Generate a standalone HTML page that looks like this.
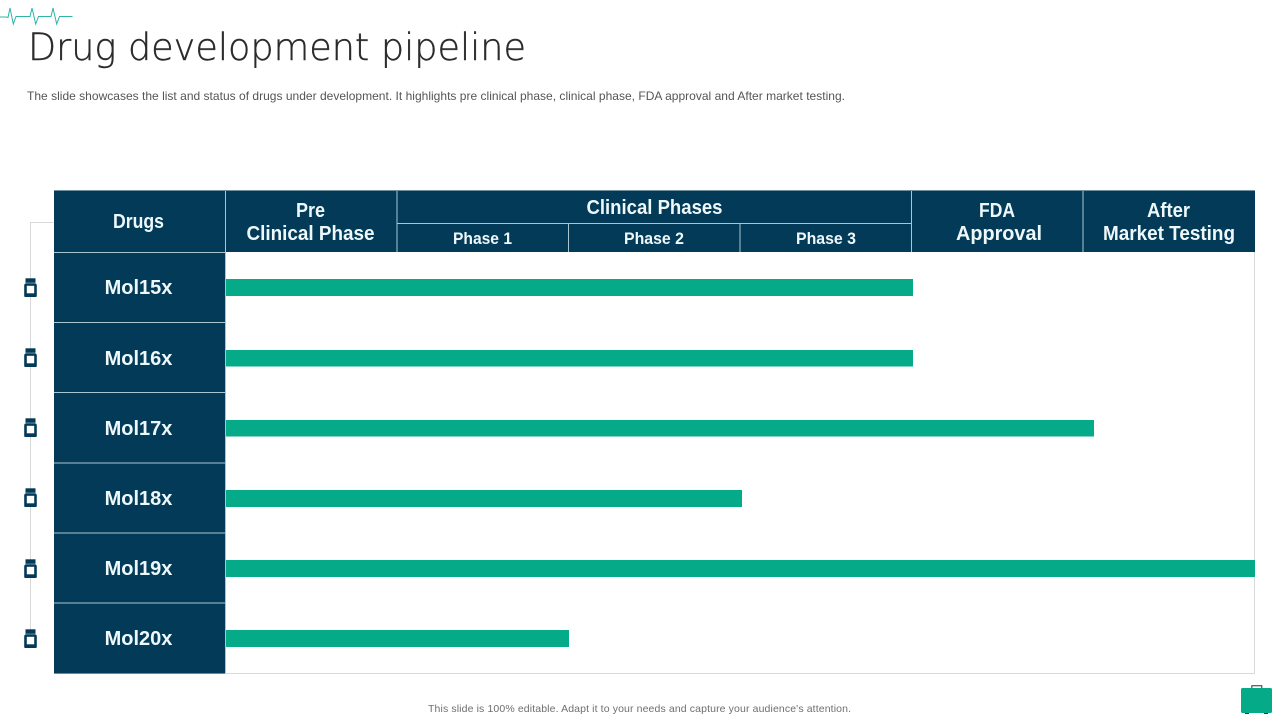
<!DOCTYPE html>
<html><head><meta charset="utf-8"><title>Drug development pipeline</title>
<style>
html,body{margin:0;padding:0;background:#fff;width:1280px;height:720px;overflow:hidden}
svg{display:block}
text{font-family:"Liberation Sans",sans-serif}
.t{font-family:"DejaVu Sans ExtraLight","DejaVu Sans",sans-serif;font-weight:200}
.h{fill:#eef8fa;font-weight:700;font-size:20px;text-anchor:middle}
.p{fill:#eef8fa;font-weight:700;font-size:16.5px;text-anchor:middle}
.m{fill:#eef8fa;font-weight:700;font-size:20px;text-anchor:middle}
</style></head><body>
<svg width="1280" height="720" viewBox="0 0 1280 720" xmlns="http://www.w3.org/2000/svg">
<defs>
<g id="b"><path fill="#023a58" d="M-5-9.700h10v4.500h-10z"/><path fill="#023a58" d="M-4-4.700h8q2.300 0 2.300 2.300v10.400q0 1-1 1h-10.600q-1 0-1-1v-10.400q0-2.300 2.300-2.300z"/><rect x="-3.700" y="-2.200" width="7.400" height="7.500" fill="#fff"/></g>
</defs>
<path d="M0 17h6l2 .5 2-9.500 3.300 16 2.700-7.500h14l2-8.500 3.700 16 2.800-7.500h12.500l2-8.500 3.700 16 2.800-7.500h13" fill="none" stroke="#2db5a5" stroke-width="1"/>
<text class="t" x="28" y="60" font-size="37" fill="#2b2b2b" stroke="#2b2b2b" stroke-width=".4" textLength="498" lengthAdjust="spacingAndGlyphs">Drug development pipeline</text>
<text x="27" y="100" font-size="12" fill="#555" textLength="818" lengthAdjust="spacing">The slide showcases the list and status of drugs under development. It highlights pre clinical phase, clinical phase, FDA approval and After  market testing.</text>
<path d="M53.500 222.500H30.500V640" fill="none" stroke="#d9d9d9"/>
<path d="M1254.500 252V673.500H54" fill="none" stroke="#d9d9d9"/>
<rect x="54" y="190" width="1201" height="62" fill="#023a58"/>
<rect x="54" y="252" width="171" height="421.500" fill="#023a58"/>
<g stroke="#a9c6d3" stroke-width="1" fill="none">
<path d="M54 252.500H225M54 322.500H225M54 392.500H225M54 463H225M54 533H225M54 603H225"/>
<path d="M225.500 190V673M397 190V252M568.500 224V252M740 224V252M911.500 190V252M1083 190V252M397 223.500H911"/>
</g>
<path d="M54 190.500H1255" stroke="#6f90a3" fill="none"/>
<text class="h" x="138.500" y="228" textLength="51" lengthAdjust="spacingAndGlyphs">Drugs</text>
<text class="h" x="310.500" y="217" textLength="29" lengthAdjust="spacingAndGlyphs">Pre</text>
<text class="h" x="310.500" y="240" textLength="128" lengthAdjust="spacingAndGlyphs">Clinical Phase</text>
<text class="h" x="654.500" y="214" textLength="136" lengthAdjust="spacingAndGlyphs">Clinical Phases</text>
<text class="p" x="482.500" y="244" textLength="59" lengthAdjust="spacingAndGlyphs">Phase 1</text>
<text class="p" x="654" y="244" textLength="60" lengthAdjust="spacingAndGlyphs">Phase 2</text>
<text class="p" x="826" y="244" textLength="60" lengthAdjust="spacingAndGlyphs">Phase 3</text>
<text class="h" x="997" y="217" textLength="36" lengthAdjust="spacingAndGlyphs">FDA</text>
<text class="h" x="999" y="240" textLength="86" lengthAdjust="spacingAndGlyphs">Approval</text>
<text class="h" x="1168.500" y="217" textLength="43" lengthAdjust="spacingAndGlyphs">After</text>
<text class="h" x="1169" y="240" textLength="132" lengthAdjust="spacingAndGlyphs">Market Testing</text>
<text class="m" x="138.500" y="294">Mol15x</text>
<text class="m" x="138.500" y="365">Mol16x</text>
<text class="m" x="138.500" y="435">Mol17x</text>
<text class="m" x="138.500" y="505">Mol18x</text>
<text class="m" x="138.500" y="575">Mol19x</text>
<text class="m" x="138.500" y="645">Mol20x</text>
<g fill="#05ab88">
<rect x="226" y="279" width="687" height="17"/>
<rect x="226" y="350" width="687" height="16.500"/>
<rect x="226" y="420" width="868" height="16.500"/>
<rect x="226" y="490" width="516" height="17"/>
<rect x="226" y="560" width="1029" height="17"/>
<rect x="226" y="630" width="343" height="17"/>
</g>
<use href="#b" x="30.500" y="288"/><use href="#b" x="30.500" y="358"/><use href="#b" x="30.500" y="428"/><use href="#b" x="30.500" y="498"/><use href="#b" x="30.500" y="569"/><use href="#b" x="30.500" y="639"/>
<text x="428" y="712" font-size="10.500" fill="#6f6f6f" textLength="423" lengthAdjust="spacing">This slide is 100% editable. Adapt it to your needs and capture your audience's attention.</text>
<path d="M1251.800 689v-3.200h10v3.200" fill="none" stroke="#333" stroke-width="1"/>
<rect x="1241" y="688" width="31" height="25" rx="1.500" fill="#05ab88"/>
<path d="M1245 713h4v1h-4zM1264 713h4v1h-4z" fill="#333"/>
</svg>
</body></html>
